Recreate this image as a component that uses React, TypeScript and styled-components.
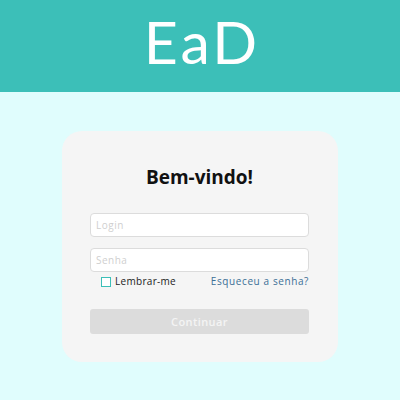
import React from "react";
import styled, { createGlobalStyle } from "styled-components";

const Global = createGlobalStyle`
  html, body { margin: 0; padding: 0; background: #e0fdfd; }
  body { font-family: "Open Sans", "Liberation Sans", sans-serif; }
  * { box-sizing: border-box; }
`;

const Page = styled.div`
  width: 400px;
  height: 400px;
  background: #e0fdfd;
  display: flex;
  flex-direction: column;
`;

const Header = styled.header`
  height: 92px;
  background: #3cbfb8;
  display: flex;
  align-items: center;
  justify-content: center;
`;

const Logo = styled.h1`
  margin: 0;
  color: #ffffff;
  font-family: "Lato", sans-serif;
  font-weight: 400;
  font-size: 59px;
  letter-spacing: 3px;
  line-height: 1;
  transform: translate(2px, -5px);
`;

const Main = styled.main`
  display: flex;
  justify-content: center;
  padding-top: 39px;
`;

const Card = styled.section`
  width: 276px;
  height: 231px;
  background: #f5f5f5;
  border-radius: 20px;
  padding: 34px 29px 0 28px;
  display: flex;
  flex-direction: column;
`;

const Title = styled.h2`
  margin: 0 0 24px;
  text-align: center;
  font-family: "Open Sans", sans-serif;
  font-weight: 700;
  font-size: 19px;
  line-height: 24px;
  color: #111;
`;

const Input = styled.input`
  width: 219px;
  height: 24px;
  border: 1px solid #dcdcdc;
  border-radius: 4px;
  background: #fff;
  padding: 0 5px;
  font-family: "Open Sans", sans-serif;
  font-size: 10px;
  letter-spacing: 0.5px;
  outline: none;
  &::placeholder { color: #cfcfcf; }
  & + & { margin-top: 11px; }
`;

const Row = styled.div`
  display: flex;
  align-items: center;
  justify-content: space-between;
  margin-top: 2px;
  padding-left: 11px;
`;

const Remember = styled.label`
  display: flex;
  align-items: center;
  gap: 4px;
  font-size: 10px;
  letter-spacing: 0.3px;
  color: #222;
`;

const Check = styled.span`
  width: 10px;
  height: 10px;
  border: 1px solid #3cbfb8;
  background: #fff;
  margin-top: 2px;
`;

const Forgot = styled.a`
  font-size: 10px;
  letter-spacing: 0.6px;
  color: #3b6f95;
  text-decoration: none;
`;

const Button = styled.button`
  margin-top: 21px;
  width: 219px;
  height: 25px;
  border: none;
  border-radius: 3px;
  background: #dcdcdc;
  color: #f4f4f4;
  font-family: "Open Sans", sans-serif;
  font-weight: 600;
  font-size: 11px;
  letter-spacing: 0.4px;
`;

export default function App() {
  return (
    <Page>
      <Global />
      <Header>
        <Logo>EaD</Logo>
      </Header>
      <Main>
        <Card>
          <Title>Bem-vindo!</Title>
          <Input placeholder="Login" />
          <Input placeholder="Senha" type="password" />
          <Row>
            <Remember>
              <Check />
              Lembrar-me
            </Remember>
            <Forgot href="#">Esqueceu a senha?</Forgot>
          </Row>
          <Button>Continuar</Button>
        </Card>
      </Main>
    </Page>
  );
}
